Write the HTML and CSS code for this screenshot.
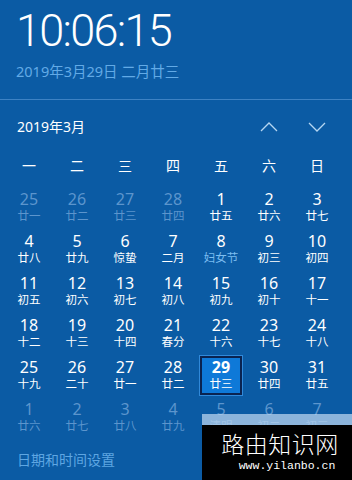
FILE: index.html
```html
<!DOCTYPE html>
<html lang="zh-CN">
<head>
<meta charset="utf-8">
<link rel="stylesheet" href="styles.css">
</head>
<body>
<div class="panel">
  <header class="clock">
    <div class="time">10:06:15</div>
    <div class="date">2019年3月29日 二月廿三</div>
  </header>
  <div class="sep"></div>
  <div class="nav">
    <div class="month">2019年3月</div>
    <div class="arrows">
      <svg class="arrow" width="18" height="10" viewBox="0 0 18 10"><path d="M1 9 L9 1 L17 9" fill="none" stroke="#b5d6f2" stroke-width="1.3"/></svg>
      <svg class="arrow" width="18" height="10" viewBox="0 0 18 10"><path d="M1 1 L9 9 L17 1" fill="none" stroke="#b5d6f2" stroke-width="1.3"/></svg>
    </div>
  </div>
  <div class="weekdays">
    <span>一</span><span>二</span><span>三</span><span>四</span><span>五</span><span>六</span><span>日</span>
  </div>
  <div class="grid">
    <div class="day dim"><span class="n">25</span><span class="l">廿一</span></div>
    <div class="day dim"><span class="n">26</span><span class="l">廿二</span></div>
    <div class="day dim"><span class="n">27</span><span class="l">廿三</span></div>
    <div class="day dim"><span class="n">28</span><span class="l">廿四</span></div>
    <div class="day"><span class="n">1</span><span class="l">廿五</span></div>
    <div class="day"><span class="n">2</span><span class="l">廿六</span></div>
    <div class="day"><span class="n">3</span><span class="l">廿七</span></div>

    <div class="day"><span class="n">4</span><span class="l">廿八</span></div>
    <div class="day"><span class="n">5</span><span class="l">廿九</span></div>
    <div class="day"><span class="n">6</span><span class="l">惊蛰</span></div>
    <div class="day"><span class="n">7</span><span class="l">二月</span></div>
    <div class="day"><span class="n">8</span><span class="l fest">妇女节</span></div>
    <div class="day"><span class="n">9</span><span class="l">初三</span></div>
    <div class="day"><span class="n">10</span><span class="l">初四</span></div>

    <div class="day"><span class="n">11</span><span class="l">初五</span></div>
    <div class="day"><span class="n">12</span><span class="l">初六</span></div>
    <div class="day"><span class="n">13</span><span class="l">初七</span></div>
    <div class="day"><span class="n">14</span><span class="l">初八</span></div>
    <div class="day"><span class="n">15</span><span class="l">初九</span></div>
    <div class="day"><span class="n">16</span><span class="l">初十</span></div>
    <div class="day"><span class="n">17</span><span class="l">十一</span></div>

    <div class="day"><span class="n">18</span><span class="l">十二</span></div>
    <div class="day"><span class="n">19</span><span class="l">十三</span></div>
    <div class="day"><span class="n">20</span><span class="l">十四</span></div>
    <div class="day"><span class="n">21</span><span class="l">春分</span></div>
    <div class="day"><span class="n">22</span><span class="l">十六</span></div>
    <div class="day"><span class="n">23</span><span class="l">十七</span></div>
    <div class="day"><span class="n">24</span><span class="l">十八</span></div>

    <div class="day"><span class="n">25</span><span class="l">十九</span></div>
    <div class="day"><span class="n">26</span><span class="l">二十</span></div>
    <div class="day"><span class="n">27</span><span class="l">廿一</span></div>
    <div class="day"><span class="n">28</span><span class="l">廿二</span></div>
    <div class="day today"><span class="n">29</span><span class="l">廿三</span></div>
    <div class="day"><span class="n">30</span><span class="l">廿四</span></div>
    <div class="day"><span class="n">31</span><span class="l">廿五</span></div>

    <div class="day dim"><span class="n">1</span><span class="l">廿六</span></div>
    <div class="day dim"><span class="n">2</span><span class="l">廿七</span></div>
    <div class="day dim"><span class="n">3</span><span class="l">廿八</span></div>
    <div class="day dim"><span class="n">4</span><span class="l">廿九</span></div>
    <div class="day dim"><span class="n">5</span><span class="l">清明</span></div>
    <div class="day dim"><span class="n">6</span><span class="l">初二</span></div>
    <div class="day dim"><span class="n">7</span><span class="l">初三</span></div>
  </div>
  <div class="settings">日期和时间设置</div>

  <div class="watermark">
    <div class="wm-strip"></div>
    <div class="wm-body">
      <div class="wm-title">路由知识网</div>
      <div class="wm-url">www.yilanbo.cn</div>
    </div>
  </div>
</div>
</body>
</html>
```

FILE: styles.css
```css
html, body {
  margin: 0;
  padding: 0;
}
body {
  width: 352px;
  height: 480px;
  overflow: hidden;
  background: #0b5ba4;
  font-family: "Noto Sans", "Noto Sans CJK SC", sans-serif;
  color: #ffffff;
}
.panel {
  position: relative;
  width: 352px;
  height: 480px;
}
.clock {
  padding: 6px 0 0 16px;
  height: 93px;
  box-sizing: border-box;
}
.time {
  font-family: "Roboto", sans-serif;
  font-weight: 300;
  font-size: 45px;
  line-height: 50px;
  letter-spacing: -1.7px;
}
.date {
  margin-top: 5px;
  font-size: 14.5px;
  line-height: 20px;
  color: #62aae6;
}
.sep {
  height: 1px;
  background: #3d82c4;
  margin-top: 6px;
}
.nav {
  display: flex;
  justify-content: space-between;
  align-items: center;
  height: 54px;
  padding: 0 26px 0 17px;
}
.month {
  font-size: 14px;
  line-height: 20px;
}
.arrows {
  display: flex;
  gap: 30px;
  align-items: center;
}
.arrow {
  display: block;
}
.weekdays {
  display: grid;
  grid-template-columns: repeat(7, 48px);
  padding-left: 5px;
  height: 24px;
  font-size: 14px;
  line-height: 24px;
  text-align: center;
}
.grid {
  display: grid;
  grid-template-columns: repeat(7, 48px);
  grid-auto-rows: 42px;
  padding-left: 5px;
  margin-top: 8px;
}
.day {
  margin: 2px 3px 1px;
  box-sizing: border-box;
  display: flex;
  flex-direction: column;
  align-items: center;
  padding-top: 2px;
}
.n {
  font-size: 16px;
  line-height: 18px;
}
.l {
  font-size: 11.5px;
  line-height: 15px;
}
.fest {
  color: #7cbdf0;
}
.dim {
  color: #5c95cd;
}
.today {
  background: #0e79d8;
  border: 2px solid #0a2350;
  box-shadow: 0 0 0 1px #3089da;
  padding-top: 0;
}
.today .n {
  font-weight: 700;
}
.settings {
  margin-top: 12px;
  padding-left: 17px;
  font-size: 14px;
  line-height: 20px;
  color: #5ea6e2;
}
.watermark {
  position: absolute;
  left: 202px;
  top: 414px;
  right: 0;
  bottom: 0;
  display: flex;
  flex-direction: column;
}
.wm-strip {
  height: 11px;
  background: rgba(190, 215, 240, 0.72);
}
.wm-body {
  flex: 1;
  background: #000000;
  display: flex;
  flex-direction: column;
  align-items: center;
}
.wm-title {
  font-family: "Noto Sans CJK SC", sans-serif;
  font-weight: 300;
  font-size: 23px;
  line-height: 28px;
  margin-top: 4px;
  margin-left: 6px;
  letter-spacing: 0.5px;
}
.wm-url {
  font-family: "Liberation Mono", monospace;
  font-size: 11.5px;
  line-height: 14px;
  margin-top: 2px;
  margin-left: 20px;
}
```
